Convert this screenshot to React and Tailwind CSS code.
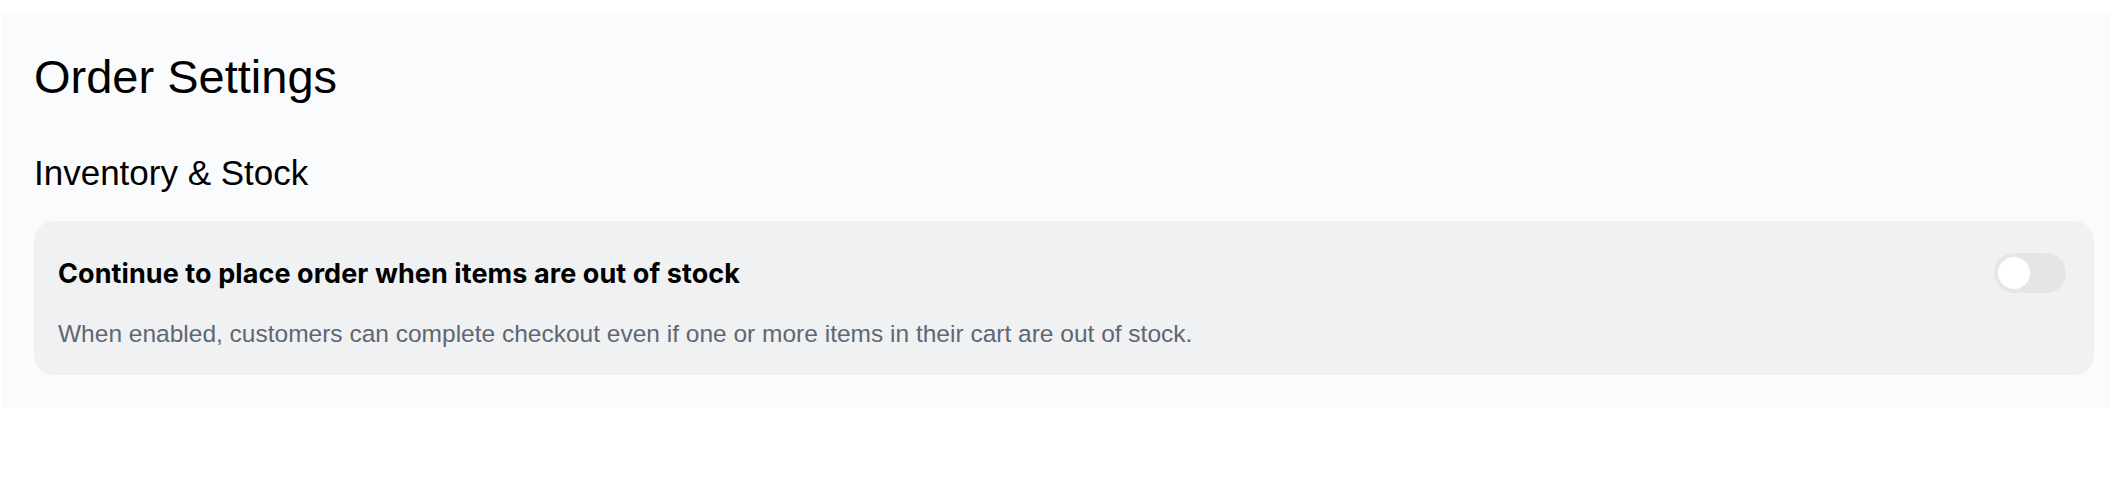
import React from "react";

export default function App() {
  return (
    <div className="w-full h-[488px] bg-white overflow-hidden" style={{ fontFamily: '"Liberation Sans", Arial, sans-serif' }}>
      <div className="ml-[2px] mt-[13px] bg-[#fafbfd] pl-[32px] pr-[16px] pt-[40px] pb-[33px]">
        <h1 className="text-[47px] leading-none text-black font-normal">Order Settings</h1>
        <h2 className="mt-[55px] text-[35px] leading-none text-black font-normal">Inventory &amp; Stock</h2>
        <div className="mt-[31px] bg-[#f0f1f3] rounded-[20px] pl-[24px] pr-[28px] pt-[32px] pb-[28px]">
          <div className="flex items-center justify-between h-[40px]">
            <div className="text-[27px] leading-none font-bold text-black tracking-[0.08px]" style={{ fontFamily: 'Inter, "Liberation Sans", sans-serif' }}>
              Continue to place order when items are out of stock
            </div>
            <button className="w-[72px] h-[40px] rounded-full bg-[#e5e6e8] p-[4px] flex items-center">
              <span className="block w-[32px] h-[32px] rounded-full bg-white"></span>
            </button>
          </div>
          <p className="mt-[29px] text-[24.5px] leading-none text-[#5e6772]">
            When enabled, customers can complete checkout even if one or more items in their cart are out of stock.
          </p>
        </div>
      </div>
    </div>
  );
}
